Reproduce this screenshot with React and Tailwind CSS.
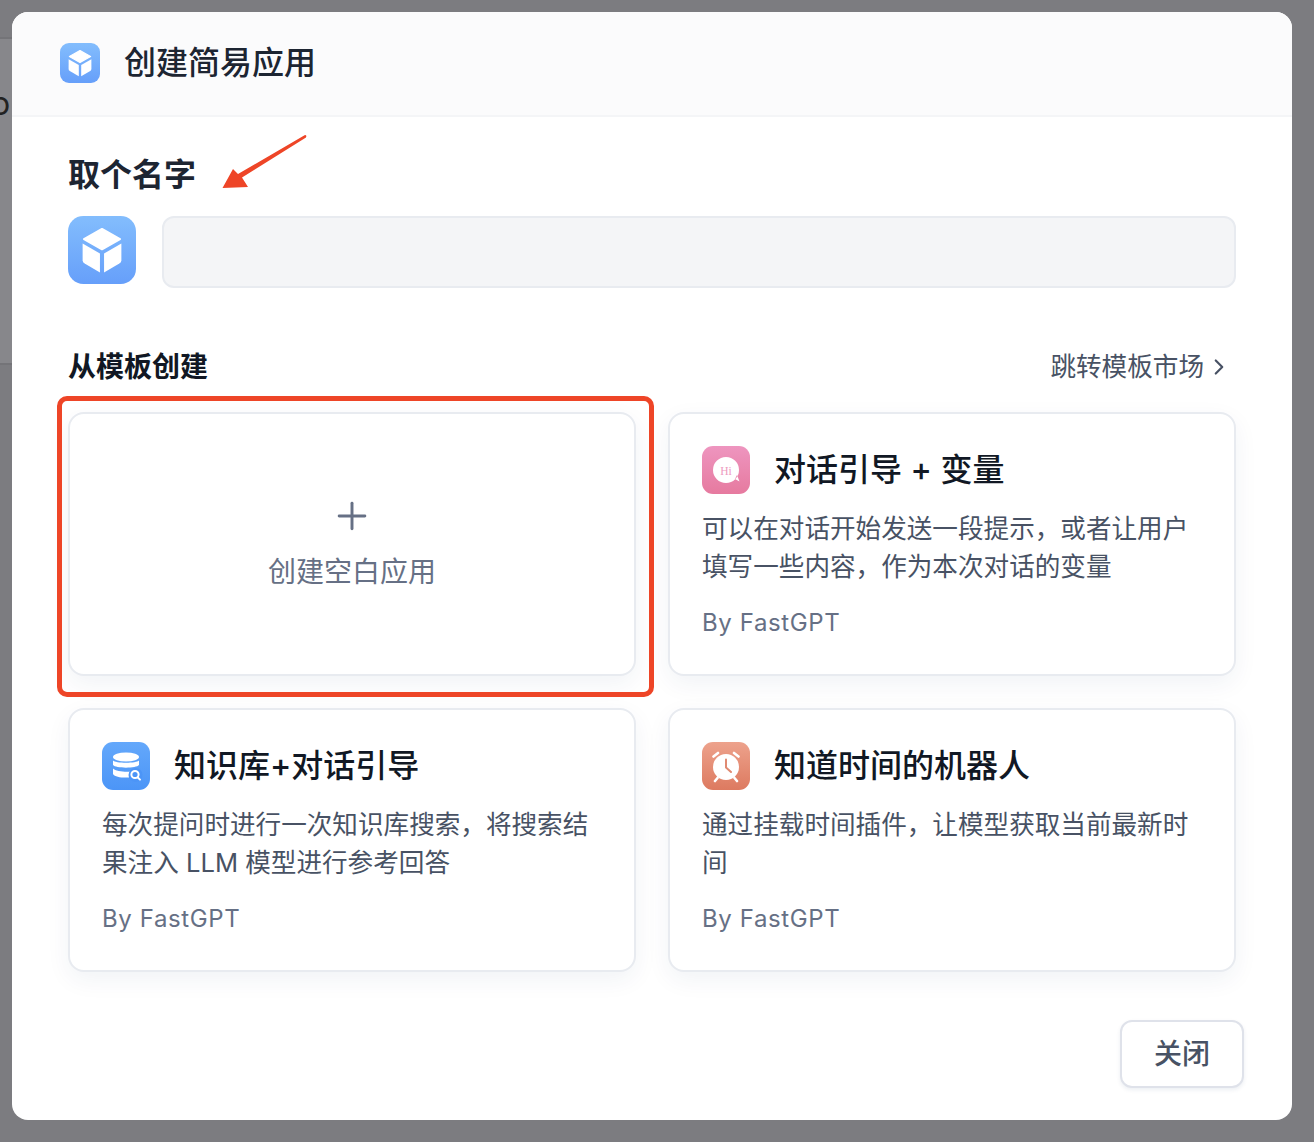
import { ChevronRight, Plus } from "lucide-react";

const font = { fontFamily: '"Inter", "Noto Sans CJK SC", sans-serif' };

function CubeIcon({ size, radius }) {
  const id = "cube" + size;
  return (
    <svg width={size} height={size} viewBox="0 0 40 40" className="shrink-0">
      <defs>
        <linearGradient id={id} x1="0" y1="0" x2="0" y2="1">
          <stop offset="0" stopColor="#83bdfd" />
          <stop offset="1" stopColor="#669ffa" />
        </linearGradient>
      </defs>
      <rect width="40" height="40" rx={radius} fill={`url(#${id})`} />
      <path d="M20 7.6 L30.6 13.6 L20 19.6 L9.4 13.6 Z" fill="#fff" stroke="#fff" strokeWidth="1.2" strokeLinejoin="round" />
      <path d="M8.6 16.2 L18.8 22 L18.8 33.2 L9.8 28 Q8.6 27.3 8.6 26 Z" fill="#fff" />
      <path d="M31.4 16.2 L21.2 22 L21.2 33.2 L30.2 28 Q31.4 27.3 31.4 26 Z" fill="#fff" />
    </svg>
  );
}

function HiIcon() {
  return (
    <svg width="48" height="48" viewBox="0 0 48 48" className="shrink-0">
      <defs>
        <linearGradient id="hi" x1="0" y1="0" x2="0" y2="1">
          <stop offset="0" stopColor="#ee95bf" />
          <stop offset="1" stopColor="#e67a9f" />
        </linearGradient>
      </defs>
      <rect width="48" height="48" rx="11" fill="url(#hi)" />
      <path d="M24 11 A13 13 0 1 1 24 37 L24 37 A13 13 0 0 1 24 11 Z M33 33 L37.5 35.5 L35 29 Z" fill="#fff" />
      <text x="24" y="28.5" textAnchor="middle" fontSize="11.5" fontFamily="Liberation Serif, serif" fill="#ee9ac0">Hi</text>
    </svg>
  );
}

function DbIcon() {
  return (
    <svg width="48" height="48" viewBox="0 0 48 48" className="shrink-0">
      <defs>
        <linearGradient id="db" x1="0" y1="0" x2="0" y2="1">
          <stop offset="0" stopColor="#64a8fb" />
          <stop offset="1" stopColor="#4c95f7" />
        </linearGradient>
      </defs>
      <rect width="48" height="48" rx="11" fill="url(#db)" />
      <ellipse cx="24" cy="15" rx="13" ry="4.6" fill="#fff" />
      <path d="M11 18.5 C13.5 21.5 34.5 21.5 37 18.5 V23 C34.5 26.5 13.5 26.5 11 23 Z" fill="#fff" />
      <path d="M11 26.5 C14 30 28 30.4 31 29 C28 31 27 33.5 27 35.5 C20 36 13 35 11 32 Z" fill="#fff" />
      <circle cx="33.5" cy="33" r="7" fill="#4c95f7" />
      <circle cx="33" cy="32.5" r="3.6" fill="none" stroke="#fff" strokeWidth="2" />
      <path d="M35.6 35.2 L38 37.6" stroke="#fff" strokeWidth="2" strokeLinecap="round" />
    </svg>
  );
}

function ClockIcon() {
  return (
    <svg width="48" height="48" viewBox="0 0 48 48" className="shrink-0">
      <defs>
        <linearGradient id="clk" x1="0" y1="0" x2="0" y2="1">
          <stop offset="0" stopColor="#eda28c" />
          <stop offset="1" stopColor="#dd7a60" />
        </linearGradient>
      </defs>
      <rect width="48" height="48" rx="11" fill="url(#clk)" />
      <circle cx="24" cy="25" r="13" fill="#fff" />
      <path d="M24 17.5 V25.5 L29 30" fill="none" stroke="#e08a72" strokeWidth="2" strokeLinecap="round" strokeLinejoin="round" />
      <path d="M11.5 14.5 L16 11 M36.5 14.5 L32 11 M15.5 36 L13 39 M32.5 36 L35 39" stroke="#fff" strokeWidth="2.6" strokeLinecap="round" />
    </svg>
  );
}

const templates = [
  {
    title: "对话引导 + 变量",
    icon: <HiIcon />,
    desc: "可以在对话开始发送一段提示，或者让用户填写一些内容，作为本次对话的变量",
  },
  {
    title: "知识库+对话引导",
    icon: <DbIcon />,
    desc: "每次提问时进行一次知识库搜索，将搜索结果注入 LLM 模型进行参考回答",
  },
  {
    title: "知道时间的机器人",
    icon: <ClockIcon />,
    desc: "通过挂载时间插件，让模型获取当前最新时间",
  },
];

function TemplateCard({ item }) {
  return (
    <div className="h-[264px] rounded-2xl border-2 border-[#e8ebf0] bg-white px-[32px] pt-[32px] shadow-[0_8px_24px_rgba(19,51,107,0.06)]">
      <div className="flex items-center gap-[24px]">
        {item.icon}
        <div className="text-[32px] leading-[48px] font-medium text-[#111824]">{item.title}</div>
      </div>
      <div className="mt-[16px] h-[78px] text-[25.6px] leading-[38.4px] text-[#485264]">{item.desc}</div>
      <div className="mt-[17px] text-[24px] leading-[36px] tracking-[0.6px] text-[#667085]">By FastGPT</div>
    </div>
  );
}

export default function App() {
  return (
    <div className="relative h-[1142px] w-[1314px] overflow-hidden bg-[#7c7c80] p-3" style={font}>
      {/* page behind the overlay */}
      <div className="absolute left-0 top-[37px] h-[328px] w-3 border-y-2 border-[#747478] bg-[#87878b]" />
      <div className="absolute -left-[9px] top-[84px] text-[32px] leading-[40px] text-[#222]">ol</div>

      <div className="relative flex h-[1108px] w-[1280px] flex-col overflow-hidden rounded-2xl bg-white">
        <div className="flex h-[105px] items-center gap-[24px] border-b-2 border-[#f4f5f7] bg-[#fbfbfc] pl-[48px] pb-[2px]">
          <CubeIcon size={40} radius={9} />
          <div className="text-[32px] leading-[48px] font-medium text-[#1d2532]">创建简易应用</div>
        </div>

        <div className="flex-1 px-[56px]">
          <div className="mt-[34px] text-[32px] leading-[48px] font-semibold text-[#1d2532]">取个名字</div>
          <div className="mt-[17px] flex gap-[26px]">
            <CubeIcon size={68} radius={9} />
            <div className="h-[72px] flex-1 rounded-xl border-2 border-[#e8ebf0] bg-[#f4f5f7]" />
          </div>

          <div className="mt-[58px] flex items-center justify-between">
            <div className="text-[28px] leading-[42px] font-semibold text-[#111824]">从模板创建</div>
            <div className="flex items-center gap-[2px] pr-[4px] text-[25.6px] leading-[42px] text-[#485264]">
              跳转模板市场
              <ChevronRight size={26} strokeWidth={2} />
            </div>
          </div>

          <div className="mt-[24px] grid grid-cols-2 gap-[32px]">
            <div className="flex h-[264px] flex-col items-center rounded-2xl border-2 border-[#e8ebf0] bg-white pt-[80px] text-[#667085] shadow-[0_8px_24px_rgba(19,51,107,0.06)]">
              <Plus size={44} strokeWidth={1.6} />
              <div className="mt-[13px] text-[28px] leading-[42px]">创建空白应用</div>
            </div>
            {templates.map((item) => (
              <TemplateCard key={item.title} item={item} />
            ))}
          </div>

          <div className="mt-[48px] flex justify-end pr-[-8px]">
            <div className="-mr-[8px] flex h-[68px] w-[124px] items-center justify-center rounded-xl border-2 border-[#dfe2ea] bg-white text-[28px] font-medium text-[#485264] shadow-[0_2px_4px_rgba(19,51,107,0.08)]">
              关闭
            </div>
          </div>
        </div>

        {/* hand drawn markup on top of the screenshot */}
        <div className="absolute left-[45px] top-[384px] h-[301px] w-[597px] rounded-[10px] border-[5px] border-[#ee4527]" />
        <svg className="absolute left-[205px] top-[118px]" width="95" height="62" viewBox="0 0 95 62">
          <path d="M5.5 58 L16 39 L21 44 L88 5 Q90 5 89 7.5 L25 47.5 L31 57 Z" fill="#ee4527" />
        </svg>
      </div>
    </div>
  );
}
